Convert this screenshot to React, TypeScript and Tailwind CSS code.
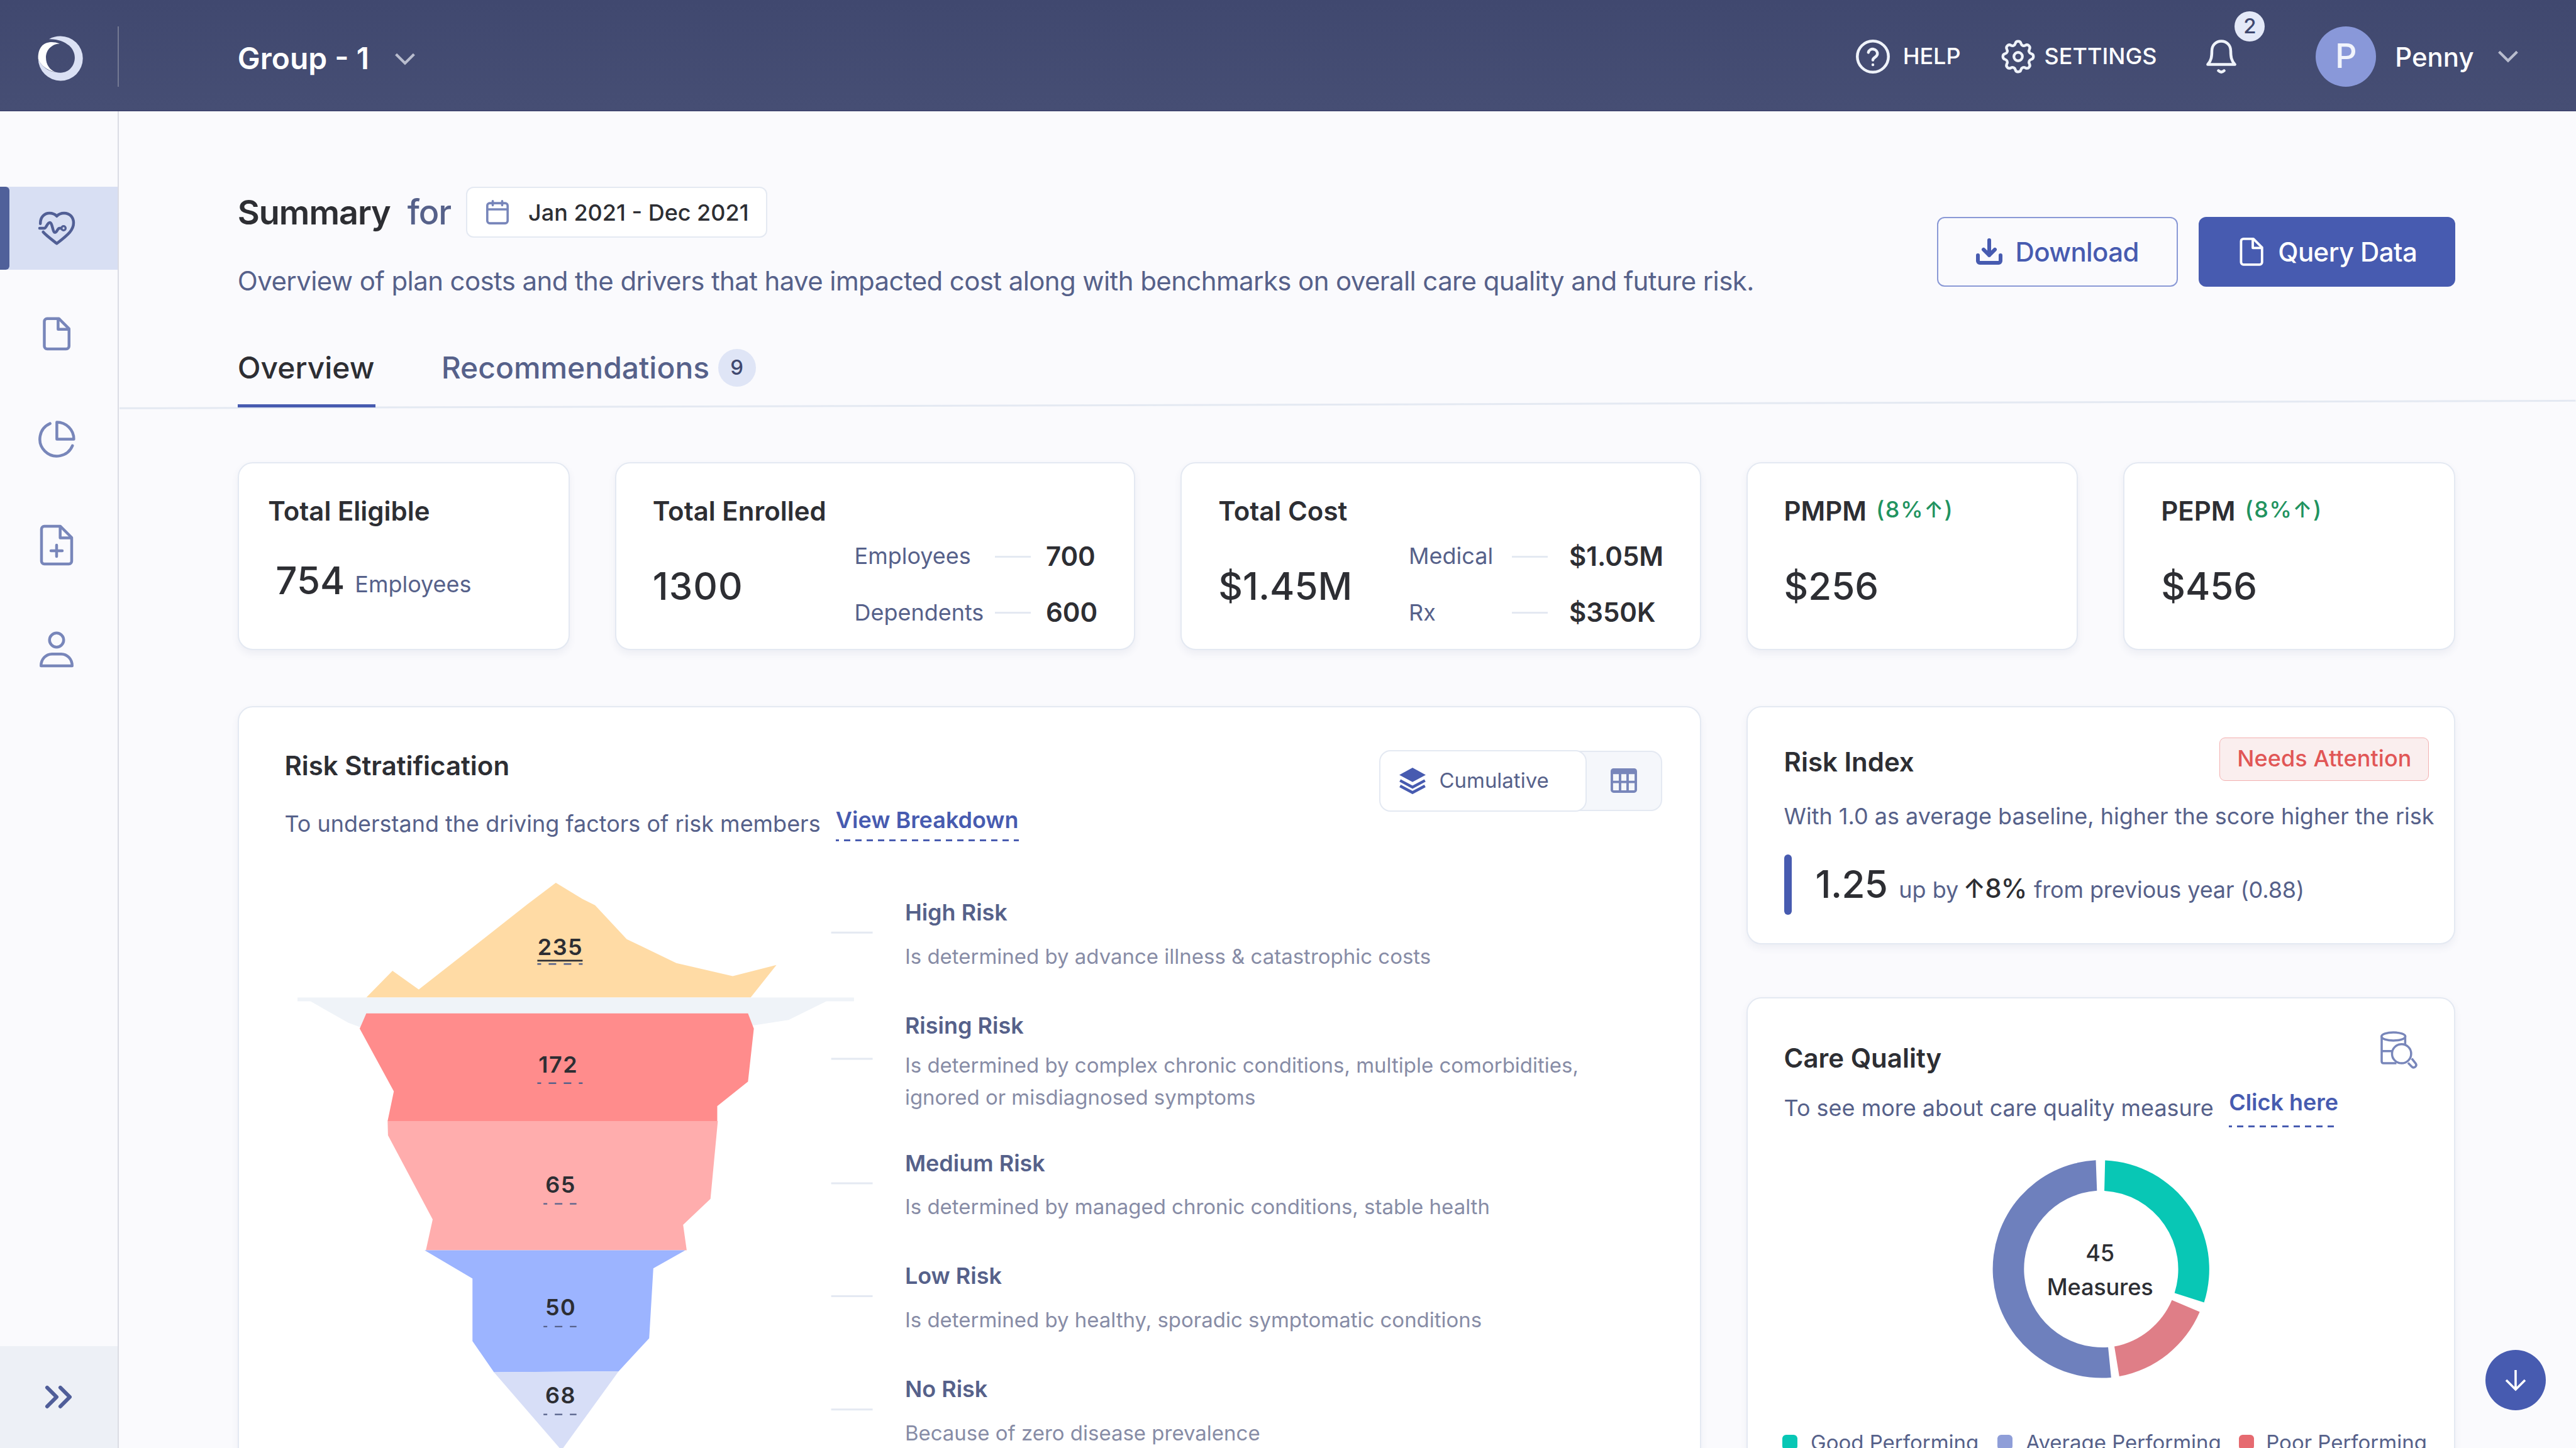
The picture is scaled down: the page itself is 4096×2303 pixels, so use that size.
import type { ReactNode } from 'react';

interface IconProps {
  className?: string;
}

interface BreakdownRow {
  label: string;
  value: string;
}

const RISK_LEVELS = [
  { title: 'High Risk', text: 'Is determined by advance illness & catastrophic costs' },
  {
    title: 'Rising Risk',
    text: 'Is determined by complex chronic conditions, multiple comorbidities, ignored or misdiagnosed symptoms',
  },
  { title: 'Medium Risk', text: 'Is determined by managed chronic conditions, stable health' },
  { title: 'Low Risk', text: 'Is determined by healthy, sporadic symptomatic conditions' },
  { title: 'No Risk', text: 'Because of zero disease prevalence' },
];

const LAYERS = [
  {
    fill: '#ffdba5',
    points:
      '37.5,61.9 51.4,47.7 65.3,57.6 100.7,29.9 122.9,12.4 138,1 152.1,9.6 158.8,12.9 175.6,30.9 201.9,43.6 231.8,50.5 255,44.6 241.3,61.9',
  },
  { fill: '#eff3f8', points: '1,61.9 296.1,61.9 296.1,63.9 281.5,63.9 261.4,73.8 243,76.6 34.4,77.6 28,75.3 7.9,63.9 1,63.9' },
  {
    fill: '#ff8c8c',
    points: '37.5,70.3 239.9,70.3 243,78.4 239.9,106.5 223.6,119.5 223.6,127.4 48.8,127.4 52.1,111.6 34,78.4',
  },
  {
    fill: '#ffadad',
    points: '48.8,127.4 223.9,127.4 220,168.7 205.5,182.4 207.4,195.9 69.1,195.9 72.7,179.6 49,135',
  },
  {
    fill: '#9cb4ff',
    points: '68.4,195.9 206.7,195.9 189.7,205.5 187.5,242.6 171.3,260.1 105.2,260.6 93.8,244.1 93.8,210.9',
  },
  { fill: '#d7def7', points: '105.2,260.6 171.3,260.1 141,302' },
];

const COUNTS = [
  { value: '235', x: 140.4, y: 39.3, dash: 44.1, width: 24 },
  { value: '172', x: 139.3, y: 101.7, dash: 107.3, width: 24 },
  { value: '65', x: 140.6, y: 165.5, dash: 171.3, width: 17.5 },
  { value: '50', x: 140.6, y: 230.5, dash: 236.4, width: 17.5 },
  { value: '68', x: 140.6, y: 277.2, dash: 283, width: 17.5 },
];

const LEADERS = [27.4, 94.4, 160.4, 220.3, 280.4];

function Logo() {
  return (
    <svg viewBox="60 76 290 292" className="size-6">
      <path
        fill="#dbe1f4"
        d="M132 97C154 84 178 78 204 78a144 144 0 1 1-142 144C80 270 122 305 175 310c78 20 123-38 123-93 0-30-14-58-36-78-32-27-78-44-130-42z"
      />
      <path fill="#fff" d="M201 127C150 108 106 117 83 145 66 166 60 196 62 224c18 44 55 74 113 86-38-12-63-50-63-93 0-50 38-89 89-90z" />
    </svg>
  );
}

function ChevronDown() {
  return (
    <svg viewBox="0 0 12 8" className="h-2 w-3" fill="none" stroke="#b9bdce" strokeWidth="1.4">
      <path d="m1.2 1.4 4.8 4.8 4.8-4.8" />
    </svg>
  );
}

function HelpIcon() {
  return (
    <svg viewBox="0 0 18 18" className="size-[18px]" fill="none" stroke="#eff3fa" strokeWidth="1.5" strokeLinecap="round">
      <circle cx="9" cy="9" r="8.25" />
      <path d="M6.6 6.8a2.45 2.45 0 0 1 4.8.8c0 1.6-2.4 1.9-2.4 3.2M9 13.3v.05" />
    </svg>
  );
}

function SettingsIcon() {
  return (
    <svg viewBox="2 2 20 20" className="size-[18px]" fill="none" stroke="#eff3fa" strokeWidth="1.6" strokeLinejoin="round">
      <path d="M10.325 4.317c.426 -1.756 2.924 -1.756 3.35 0a1.724 1.724 0 0 0 2.573 1.066c1.543 -.94 3.31 .826 2.37 2.37a1.724 1.724 0 0 0 1.065 2.572c1.756 .426 1.756 2.924 0 3.35a1.724 1.724 0 0 0 -1.066 2.573c.94 1.543 -.826 3.31 -2.37 2.37a1.724 1.724 0 0 0 -2.572 1.065c-.426 1.756 -2.924 1.756 -3.35 0a1.724 1.724 0 0 0 -2.573 -1.066c-1.543 .94 -3.31 -.826 -2.37 -2.37a1.724 1.724 0 0 0 -1.065 -2.572c-1.756 -.426 -1.756 -2.924 0 -3.35a1.724 1.724 0 0 0 1.066 -2.573c-.94 -1.543 .826 -3.31 2.37 -2.37c1 .608 2.296 .07 2.572 -1.065z" />
      <circle cx="12" cy="12" r="2.5" />
    </svg>
  );
}

function BellIcon() {
  return (
    <svg viewBox="0 0 16 18" className="h-[18px] w-4" fill="none" stroke="#eff3fa" strokeWidth="1.5" strokeLinecap="round" strokeLinejoin="round">
      <path d="M8 .8c3 0 5 2.3 5 5.2 0 3 .3 5.2 2.2 7.2H.8C2.7 11.2 3 9 3 6 3 3.1 5 .8 8 .8z" />
      <path d="M6.5 16.5q1.5 1.4 3 0" />
    </svg>
  );
}

function HeartIcon() {
  return (
    <svg viewBox="0 0 20 18" className="h-[18px] w-5" fill="none" stroke="#515f95" strokeWidth="1.5" strokeLinecap="round" strokeLinejoin="round">
      <path d="M1.4 6.6C1.3 3.2 3.5 1 6.2 1c1.8 0 3 .6 3.9 1.6C11 1.6 12.2 1 14 1c2.8 0 5 2 5 5.2 0 3.6-2.5 6-8.9 10.9C6.5 14.3 4.2 12.6 2.9 11" />
      <path d="M1 9h2.5C4.6 9 5 6 6.4 6S7.9 11.2 9.1 11.2 10.4 9 11.6 9h.7" />
      <circle cx="13.7" cy="9" r="1.1" strokeWidth="1.1" />
    </svg>
  );
}

function FileIcon({ className }: IconProps) {
  return (
    <svg viewBox="0 0 16 20" className={className} fill="none" stroke="currentColor" strokeWidth="1.5" strokeLinejoin="round">
      <path d="M3 1.9h6.2l5.4 5.4v9.2a1.5 1.5 0 0 1-1.5 1.5H3a1.5 1.5 0 0 1-1.5-1.5V3.4A1.5 1.5 0 0 1 3 1.9z" />
      <path d="M8.8 2v5.6h5.7" />
    </svg>
  );
}

function PieIcon() {
  return (
    <svg viewBox="0 0 24 24" className="size-[21.6px]" fill="none" stroke="currentColor" strokeWidth="1.67" strokeLinecap="round" strokeLinejoin="round">
      <path d="M21.21 15.89A10 10 0 1 1 8 2.83" />
      <path d="M22 12A10 10 0 0 0 12 2v10z" />
    </svg>
  );
}

function FilePlusIcon() {
  return (
    <svg viewBox="0 0 18 22" className="h-[22px] w-[18px]" fill="none" stroke="currentColor" strokeWidth="1.5" strokeLinecap="round" strokeLinejoin="round">
      <path d="M2.8 1h8.2l6 6v12.5A1.5 1.5 0 0 1 15.5 21H2.5A1.5 1.5 0 0 1 1 19.5v-17A1.5 1.5 0 0 1 2.5 1z" />
      <path d="M10.9 1.2V7.2h5.9M9 11v6M6 14h6" />
    </svg>
  );
}

function UserIcon() {
  return (
    <svg viewBox="0 0 18 20" className="h-5 w-[18px]" fill="none" stroke="currentColor" strokeWidth="1.5" strokeLinejoin="round">
      <circle cx="9" cy="5" r="3.75" />
      <path d="M.75 18.7c0-3.6 2.6-6.3 5.8-6.3h4.9c3.2 0 5.8 2.7 5.8 6.3z" />
    </svg>
  );
}

function CalendarIcon() {
  return (
    <svg viewBox="0 0 12 13" className="h-[13px] w-3" fill="none" stroke="#7886ba" strokeWidth="1.2" strokeLinecap="round">
      <rect x=".6" y="1.7" width="10.8" height="10.7" rx="1.3" />
      <path d="M.8 5h10.4M3.5.6v2.2M8.5.6v2.2" />
    </svg>
  );
}

function DownloadIcon() {
  return (
    <svg viewBox="0 0 16 16" className="size-4" fill="none" stroke="#475bb0" strokeWidth="2" strokeLinecap="round" strokeLinejoin="round">
      <path d="M2 10v3a1 1 0 0 0 1 1h10a1 1 0 0 0 1-1v-3M8 2v8M5 7l3 3 3-3" />
    </svg>
  );
}

function LayersIcon() {
  return (
    <svg viewBox="0 0 14 14" className="size-3.5">
      <path d="M7 0l7 3.8-7 3.8L0 3.8z" fill="#475bb0" />
      <path d="m.4 6.8 6.6 3.5 6.6-3.5M.4 9.7 7 13.2l6.6-3.5" fill="none" stroke="#475bb0" strokeWidth="1.5" />
    </svg>
  );
}

function TableIcon() {
  return (
    <svg viewBox="0 0 14 13" className="h-[13px] w-3.5" fill="none" stroke="#7886ba" strokeWidth="1.3">
      <rect x=".65" y=".65" width="12.7" height="11.7" rx=".9" />
      <path d="M.6 2.2h12.8" strokeWidth="1.8" />
      <path d="M.6 7.2h12.8M5 2v10.5M9 2v10.5" />
    </svg>
  );
}

function DataSearchIcon() {
  return (
    <svg viewBox="50 45 250 255" className="h-[21.2px] w-[20.8px]" fill="none" stroke="#7886ba" strokeWidth="14">
      <ellipse cx="141" cy="87" rx="76" ry="26" />
      <path d="M66 88v158q0 12 12 12h82M216 88v50M66 180h68" />
      <circle cx="193" cy="197" r="61" />
      <path d="m234 255 24 25q10 10 22 1 12-10 2-23l-24-30" />
    </svg>
  );
}

function DashedRule({ className = '' }: IconProps) {
  return (
    <div
      className={`h-px bg-[repeating-linear-gradient(90deg,#475bb0_0_1.7px,transparent_1.7px_4.4px,#475bb0_4.4px_6px)] ${className}`}
    />
  );
}

function Card({ className = '', children }: { className?: string; children: ReactNode }) {
  return (
    <section className={`border border-[#e4e9f2] bg-white shadow-[0_2px_4px_rgba(70,80,130,0.07)] ${className}`}>
      {children}
    </section>
  );
}

function Header() {
  return (
    <header className="flex h-[59px] items-start border-b border-[#3f4570] bg-linear-to-b from-[#40486f] to-[#464e74] pt-[14px] text-white">
      <div className="flex h-8 w-[63px] items-center justify-center border-r border-[#737992] pt-[2px] pl-[2px]">
        <Logo />
      </div>
      <div className="flex h-8 items-center gap-[13px] pt-[3px] pl-[63px]">
        <span className="text-[16px] leading-5 font-semibold">Group - 1</span>
        <ChevronDown />
      </div>
      <div className="ml-auto flex h-8 items-center text-[12px] font-medium">
        <HelpIcon />
        <span className="ml-[7px] w-[52px]">HELP</span>
        <SettingsIcon />
        <span className="ml-[5px] w-[86px]">SETTINGS</span>
        <div className="relative">
          <BellIcon />
          <span className="absolute -top-[15px] left-[15px] flex size-4 items-center justify-center rounded-full bg-[#e4e9f8] text-[11px] text-[#40486f]">
            2
          </span>
        </div>
        <span className="ml-[42px] flex size-8 items-center justify-center rounded-full bg-[#8998d9] text-[18px] text-[#f1f4fc]">P</span>
        <span className="ml-[10px] w-[54px] pt-px text-[14px]">Penny</span>
        <ChevronDown />
        <span className="w-[30px]" />
      </div>
    </header>
  );
}

function Sidebar() {
  return (
    <aside className="flex w-[63px] flex-col border-r border-[#dbdce4] pt-10 text-[#7886ba]">
      <div className="flex h-11 items-center bg-[#d8dff3]">
        <span className="h-11 w-[5px] rounded-r-[2px] bg-[#50609a]" />
        <span className="ml-[15px]">
          <HeartIcon />
        </span>
      </div>
      <div className="mr-[2px] flex flex-col items-center">
        <FileIcon className="mt-[24px] h-5 w-4" />
        <span className="mt-[35px]">
          <PieIcon />
        </span>
        <span className="mt-[34.4px]">
          <FilePlusIcon />
        </span>
        <span className="mt-[34.5px]">
          <UserIcon />
        </span>
      </div>
      <div className="mt-auto flex h-[54px] items-center bg-[#edf0f6] pl-[19px]">
        <svg viewBox="0 0 24 24" className="size-6" fill="none" stroke="#505e99" strokeWidth="2" strokeLinecap="round" strokeLinejoin="round">
          <path d="m6 17 5-5-5-5M13 17l5-5-5-5" />
        </svg>
      </div>
    </aside>
  );
}

function PageHeading() {
  return (
    <div className="flex justify-between pr-16 pl-[63px]">
      <div>
        <div className="flex h-[27px] items-center text-[18px]">
          <h1 className="w-[90px] pt-px font-semibold tracking-[-0.35px] text-[#2d2e33]">Summary</h1>
          <span className="w-[31px] pt-px font-medium tracking-[-0.35px] text-[#56618a]">for</span>
          <button className="flex h-[27px] w-[160px] items-center rounded border border-[#e4e9f2] bg-white pl-[10px] text-[12px] font-medium text-[#2d2e33]">
            <CalendarIcon />
            <span className="ml-[10.5px] pt-px whitespace-nowrap">Jan 2021 - Dec 2021</span>
          </button>
        </div>
        <p className="mt-[13px] text-[14px] leading-5 tracking-[-0.2px] text-[#56618a]">
          Overview of plan costs and the drivers that have impacted cost along with benchmarks on overall care quality and future risk.
        </p>
      </div>
      <div className="mt-4 flex gap-[11px] text-[14px] font-medium tracking-[-0.2px]">
        <button className="flex h-[37px] w-[128px] items-center rounded border border-[#8a99d6] pl-[19px] text-[#475bb0]">
          <DownloadIcon />
          <span className="ml-[6px] pt-px tracking-[-0.2px]">Download</span>
        </button>
        <button className="flex h-[37px] w-[136px] items-center rounded bg-[#475bb0] pl-[21px] text-white">
          <FileIcon className="h-[17px] w-[14px]" />
          <span className="ml-[7px] pt-px tracking-[-0.2px]">Query Data</span>
        </button>
      </div>
    </div>
  );
}

function Tabs() {
  return (
    <nav className="relative mt-[26px] flex h-[31px] pl-[63px] text-[16px] leading-5 font-medium">
      {/* the rule under the tabs rises slightly to the right */}
      <svg viewBox="0 0 1303 6" className="absolute top-[26px] left-0 h-[6px] w-[1303px]">
        <path d="M0 5.45 1303 1.45" stroke="#e4e9f2" strokeWidth="1" />
      </svg>
      <span className="relative h-[31px] w-[73px] border-b-2 border-[#475bb0] pt-[.4px] text-[#2d2e33]">Overview</span>
      <span className="ml-[35px] flex h-5 items-center text-[#56618a]">
        <span className="pt-[.8px]">Recommendations</span>
        <span className="ml-[4.5px] flex size-5 items-center justify-center rounded-full bg-[#dfe5f6] text-[11px] text-[#40486f]">9</span>
      </span>
    </nav>
  );
}

function Breakdown({ rows, className, labelClass, valueClass }: { rows: BreakdownRow[]; className: string; labelClass: string; valueClass: string }) {
  return (
    <div className={`flex flex-col gap-[10px] ${className}`}>
      {rows.map((row) => (
        <div key={row.label} className="flex h-5 items-center">
          <span className={`text-[12px] text-[#56618a] ${labelClass}`}>{row.label}</span>
          <span className="h-px w-[19px] bg-[#e4e9f2]" />
          <span className={`text-[14px] font-semibold ${valueClass}`}>{row.value}</span>
        </div>
      ))}
    </div>
  );
}

function RateCard({ title, value }: { title: string; value: string }) {
  return (
    <Card className="rounded-lg pt-[15.4px] pl-[19.3px]">
      <div className="flex h-5 items-center">
        <h3 className="text-[14px] leading-5 font-semibold">{title}</h3>
        <span className="ml-[5px] pb-[1px] text-[12px] font-medium tracking-[0.5px] text-[#21935f]">(8%↑)</span>
      </div>
      <p className="mt-[18px] text-[20px] leading-6 font-medium">{value}</p>
    </Card>
  );
}

function Stats() {
  return (
    <div className="mt-[29px] grid h-[100px] grid-cols-[176px_276px_276px_176px_176px] gap-6 pl-[63px] text-[#2d2e33]">
      <Card className="rounded-lg pt-[15.4px] pl-[15.5px]">
        <h3 className="text-[14px] leading-5 font-semibold">Total Eligible</h3>
        <div className="mt-[15px] flex h-6 items-center pl-[4px]">
          <span className="text-[20px] leading-6 font-medium">754</span>
          <span className="ml-[5.3px] pt-1 text-[12px] leading-4 text-[#56618a]">Employees</span>
        </div>
      </Card>
      <Card className="flex rounded-lg pl-[19.4px]">
        <div className="w-[107px] pt-[15.4px]">
          <h3 className="text-[14px] leading-5 font-semibold">Total Enrolled</h3>
          <p className="mt-[18px] text-[20px] leading-6 font-medium tracking-[0.35px]">1300</p>
        </div>
        <Breakdown
          className="pt-[39.5px]"
          labelClass="w-[74.5px]"
          valueClass="ml-2"
          rows={[
            { label: 'Employees', value: '700' },
            { label: 'Dependents', value: '600' },
          ]}
        />
      </Card>
      <Card className="flex rounded-lg pl-[19.4px]">
        <div className="w-[101px] pt-[15.4px]">
          <h3 className="text-[14px] leading-5 font-semibold">Total Cost</h3>
          <p className="mt-[18px] text-[20px] leading-6 font-medium">$1.45M</p>
        </div>
        <Breakdown
          className="pt-[39.5px]"
          labelClass="w-[54.6px]"
          valueClass="ml-[11.4px]"
          rows={[
            { label: 'Medical', value: '$1.05M' },
            { label: 'Rx', value: '$350K' },
          ]}
        />
      </Card>
      <RateCard title="PMPM" value="$256" />
      <RateCard title="PEPM" value="$456" />
    </div>
  );
}

function IcebergChart() {
  return (
    <svg viewBox="0 0 307 301" className="h-[301px] w-[307px] shrink-0">
      {LAYERS.map((layer) => (
        <polygon key={layer.fill} points={layer.points} fill={layer.fill} />
      ))}
      {COUNTS.map((count) => (
        <g key={count.value}>
          <text x={count.x} y={count.y} textAnchor="middle" fontSize="12" fontWeight="600" letterSpacing=".5" fill="#2d2e33">
            {count.value}
          </text>
          <line
            x1={140.2 - count.width / 2}
            x2={140.2 + count.width / 2}
            y1={count.dash}
            y2={count.dash}
            stroke="#56618a"
            strokeWidth=".8"
            strokeDasharray="4 4"
            strokeDashoffset="2"
          />
        </g>
      ))}
      <path d="M128.2 42.3h24" stroke="#2d2e33" strokeWidth=".9" />
      {LEADERS.map((y) => (
        <path key={y} d={`M284 ${y}h22`} stroke="#e4e9f2" />
      ))}
    </svg>
  );
}

function RiskStratification() {
  return (
    <Card className="h-[420px] w-[776px] rounded-t-lg">
      <div className="flex h-[72px] justify-between pr-5 pl-[24.2px]">
        <div className="pt-[21px]">
          <h2 className="text-[14px] leading-5 font-semibold text-[#2d2e33]">Risk Stratification</h2>
          <div className="mt-[9px] flex text-[12px] leading-5 whitespace-nowrap">
            <p className="w-[292.3px] pt-[2px] text-[#56618a]">To understand the driving factors of risk members</p>
            <a className="font-semibold text-[#475bb0]">
              View Breakdown
              <DashedRule />
            </a>
          </div>
        </div>
        <div className="mt-[23px] flex h-8 w-[149.5px] rounded-md border border-[#e4e9f2] bg-[#f5f7fb]">
          <span className="-my-px -ml-px flex w-[110px] items-center rounded-md border border-[#e4e9f2] bg-white pl-[10px] text-[11px] text-[#56618a]">
            <LayersIcon />
            <span className="ml-[7px]">Cumulative</span>
          </span>
          <span className="flex flex-1 items-center justify-center">
            <TableIcon />
          </span>
        </div>
      </div>
      <div className="mt-5 flex pl-[30px]">
        <IcebergChart />
        <ul className="w-[390px] pt-[9px] pl-[16.2px]">
          {RISK_LEVELS.map((level) => {
            const isLong = level.text.length > 60;
            return (
              <li key={level.title} className={isLong ? 'h-[73px]' : 'h-[60px]'}>
                <h4 className="text-[12px] leading-4 font-semibold text-[#56618a]">{level.title}</h4>
                <p className={`text-[11px] leading-[17px] text-[#878ca6] ${isLong ? 'mt-[4.6px]' : 'mt-[6.6px]'}`}>{level.text}</p>
              </li>
            );
          })}
        </ul>
      </div>
    </Card>
  );
}

function RiskIndex() {
  return (
    <Card className="h-[126.5px] rounded-lg pl-[19.3px]">
      <div className="flex items-start justify-between pr-[13.3px]">
        <h2 className="pt-[19px] text-[14px] leading-5 font-semibold text-[#2d2e33]">Risk Index</h2>
        <span className="mt-4 flex h-[23px] w-[111px] items-center justify-center rounded-[3px] border-[0.5px] border-[#f3b0b0] bg-[#faeeee] text-[12px] font-medium tracking-[0.03px] text-[#e15656]">
          Needs Attention
        </span>
      </div>
      <p className="mt-[9px] text-[12px] leading-5 whitespace-nowrap text-[#56618a]">
        With 1.0 as average baseline, higher the score higher the risk
      </p>
      <div className="mt-[10px] flex h-8 text-[12px] leading-8 text-[#56618a]">
        <span className="h-8 w-1 rounded-full bg-[#475bb0]" />
        <div className="ml-[12.7px] flex items-baseline">
          <span className="text-[20px] font-medium tracking-[-0.2px] text-[#2d2e33]">1.25</span>
          <span className="ml-[6px]">up by</span>
          <span className="ml-[2.3px] text-[14px] font-medium tracking-[-0.3px] text-[#2d2e33]">↑8%</span>
          <span className="ml-[3.8px] tracking-[-0.03px]">from previous year (0.88)</span>
        </div>
      </div>
    </Card>
  );
}

function Donut() {
  return (
    <svg viewBox="-58 -58 116 116" className="size-[116.4px]">
      <path fill="#08c7b5" d="M2.9-57.5A57.6 57.6 0 0 1 55.2 17.6L39.6 12.6A41.5 41.5 0 0 0 2.5-41.4z" />
      <path fill="#df7e87" d="M52.9 22.6A57.6 57.6 0 0 1 10.4 56.7L7.8 40.9A41.5 41.5 0 0 0 38.2 16.4z" />
      <path fill="#6e80bd" d="M6.1 57.3A57.6 57.6 0 1 1-2-57.6L-1.4-41.5A41.5 41.5 0 1 0 4.5 41.3z" />
      <g textAnchor="middle" fontSize="12" fontWeight="500" fill="#2d2e33">
        <text x=".2" y="-4.3">
          45
        </text>
        <text x=".2" y="13.7" letterSpacing="-.05">
          Measures
        </text>
      </g>
    </svg>
  );
}

function CareQuality() {
  return (
    <Card className="mt-7 h-[280px] rounded-t-lg pl-[19.3px]">
      <div className="flex justify-between pt-[16.5px] pr-[19px]">
        <h2 className="pt-[5px] text-[14px] leading-5 font-semibold text-[#2d2e33]">Care Quality</h2>
        <DataSearchIcon />
      </div>
      <div className="mt-[3.8px] flex h-[23px] text-[12px] leading-5 whitespace-nowrap">
        <p className="w-[236px] pt-[3px] text-[#56618a]">To see more about care quality measure</p>
        <a className="font-semibold text-[#475bb0]">
          Click here
          <DashedRule className="mt-[2px]" />
        </a>
      </div>
      <div className="mt-[17px] ml-[109.2px]">
        <Donut />
      </div>
      <div className="mt-[25.6px] -ml-[.8px] flex items-center text-[11px] whitespace-nowrap text-[#56618a]">
        <span className="size-2 rounded-[2px] bg-[#08c7b5]" />
        <span className="ml-[7px] w-[99px]">Good Performing</span>
        <span className="size-2 rounded-[2px] bg-[#8f9ed8]" />
        <span className="ml-[7px] w-[113px]">Average Performing</span>
        <span className="size-2 rounded-[2px] bg-[#e66a70]" />
        <span className="ml-[6.5px]">Poor Performing</span>
      </div>
    </Card>
  );
}

export default function App() {
  return (
    <div className="h-screen w-screen overflow-hidden bg-[#fafafd] font-['Inter',sans-serif]">
      <div className="relative flex h-[768px] w-[1366px] flex-col overflow-hidden [zoom:2.9986]">
        <Header />
        <div className="flex min-h-0 flex-1">
          <Sidebar />
          <main className="min-w-0 flex-1 overflow-hidden pt-10">
            <PageHeading />
            <Tabs />
            <Stats />
            <div className="mt-[29.5px] flex gap-6 pl-[63px]">
              <RiskStratification />
              <div className="w-[376px]">
                <RiskIndex />
                <CareQuality />
              </div>
            </div>
          </main>
        </div>
        <button className="absolute right-4 bottom-5 flex size-8 items-center justify-center rounded-full bg-[#475bb0]">
          <svg viewBox="0 0 12 12" className="size-3" fill="none" stroke="#fff" strokeWidth="1.2">
            <path d="M6 .7v10M1 6l5 5 5-5" />
          </svg>
        </button>
      </div>
    </div>
  );
}
